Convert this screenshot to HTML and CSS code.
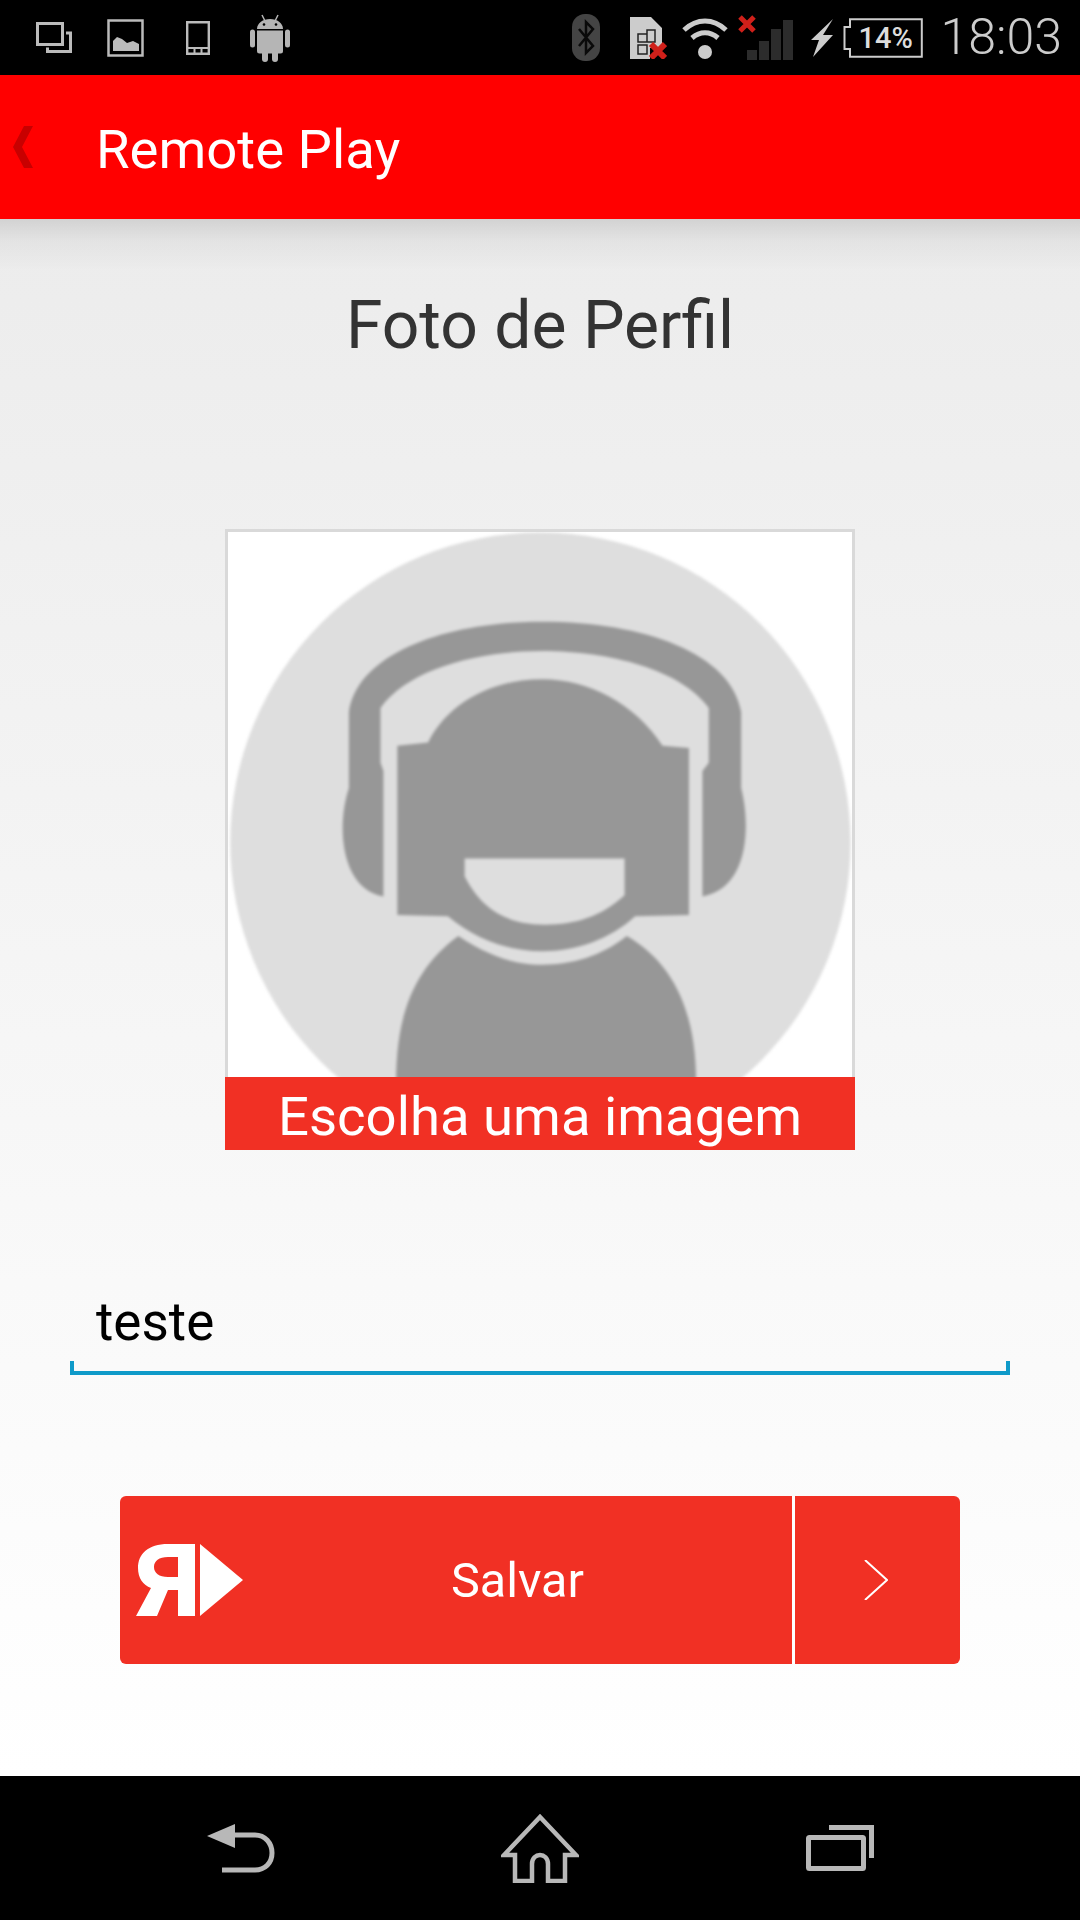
FILE: index.html
```html
<!DOCTYPE html>
<html lang="en">
<head>
    <meta charset="UTF-8">
    <meta name="viewport" content="width=device-width, initial-scale=1.0">
    <title>Remote Play</title>
    <link rel="stylesheet" href="styles.css">
</head>
<body>
    <div class="status-bar">
        <div class="status-left">
            <svg class="ic-windows" viewBox="0 0 36 31"><path d="M1.500 1.500h25v21h-25z" fill="none" stroke="#bbb" stroke-width="3"/><path d="M30 11h4.500v18.500h-23v-4" fill="none" stroke="#bbb" stroke-width="3"/></svg>
            <svg class="ic-picture" viewBox="0 0 37 38"><path d="M1.500 1.500h34v35h-34z" fill="none" stroke="#bbb" stroke-width="2.500"/><path d="M6 32V22l4-4 5 2 5 4 6-2 6 3v7z" fill="#bbb"/></svg>
            <svg class="ic-phone" viewBox="0 0 24 34"><path d="M1.200 1.200h21.600v31.600H1.200z" fill="none" stroke="#bbb" stroke-width="2.400"/><path d="M1 27h22M8.500 27v6M15.500 27v6" fill="none" stroke="#bbb" stroke-width="2"/></svg>
            <svg class="ic-android" viewBox="0 0 40 48"><path d="M12 1l3 6M28 1l-3 6" stroke="#b5b5b5" stroke-width="1.500"/><path d="M7 15C7 9 13 5 20 5s13 4 13 10z" fill="#b5b5b5"/><path d="M7 16.500h26V37a2.500 2.500 0 0 1-2.500 2.500h-21A2.500 2.500 0 0 1 7 37z" fill="#b5b5b5"/><rect x="0" y="15.500" width="5" height="18" rx="2.500" fill="#b5b5b5"/><rect x="35" y="15.500" width="5" height="18" rx="2.500" fill="#b5b5b5"/><rect x="12" y="36" width="6" height="12" rx="3" fill="#b5b5b5"/><rect x="22" y="36" width="6" height="12" rx="3" fill="#b5b5b5"/><circle cx="14" cy="10.500" r="1.300" fill="#000"/><circle cx="26" cy="10.500" r="1.300" fill="#000"/></svg>
        </div>
        <div class="status-right">
            <svg class="ic-bt" viewBox="0 0 28 47"><rect width="28" height="47" rx="13" fill="#444"/><path d="M7 15l14 17-7 7V8l7 7L7 32" fill="none" stroke="#0a0a0a" stroke-width="2.500"/></svg>
            <svg class="ic-sim" viewBox="0 0 37 42"><path d="M0 0h21l11 11v20H20v11H0z" fill="#ccc"/><path d="M8 17h9v8H8zM8 28h9v9H8zM17 13h8v12h-8z" fill="none" stroke="#222" stroke-width="1.500"/><path d="M21 27l14 14M35 27L21 41" stroke="#d0201a" stroke-width="6"/></svg>
            <svg class="ic-wifi" viewBox="0 0 46 42"><path d="M2 13C15 1 31 1 44 13" fill="none" stroke="#ccc" stroke-width="5"/><path d="M10 21c8-7 18-7 26 0" fill="none" stroke="#ccc" stroke-width="5"/><circle cx="23" cy="35" r="7" fill="#ccc"/></svg>
            <svg class="ic-signal" viewBox="0 0 55 45"><path d="M2 2l14 14M16 2L2 16" stroke="#d0201a" stroke-width="5"/><path d="M9 35h10v10H9zM21 26h10v19H21zM33 14h10v31H33zM45 5h10v40H45z" fill="#2c2c2c"/></svg>
            <svg class="ic-bolt" viewBox="0 0 23 38"><path d="M22 0L12 16h10L2 38l6-17H0z" fill="#ccc"/></svg>
            <div class="battery">
                <svg class="ic-battery" viewBox="0 0 80 40"><path d="M7 9V1.200h71.800v37.600H7V31H1.500V9z" fill="none" stroke="#ccc" stroke-width="2"/></svg>
                <span class="battery-text">14%</span>
            </div>
            <span class="clock">18:03</span>
        </div>
    </div>

    <div class="toolbar">
        <svg class="back-chev" viewBox="0 0 20 42"><path d="M11 0h9L9 21l11 21h-9L0 21z" fill="#c80000"/></svg>
        <span class="toolbar-title">Remote Play</span>
    </div>

    <div class="content">
        <h1 class="page-title">Foto de Perfil</h1>

        <div class="avatar">
            <svg class="avatar-img" viewBox="43 52 1482 1295">
                <rect x="36" y="45" width="1496" height="1302" fill="#fff"/>
                <g class="avatar-soft">
                    <circle cx="785" cy="790" r="737" fill="#dedede"/>
                    <path d="M330 660V480C350 340 560 265 790 265C1030 265 1240 340 1262 480V660C1285 750 1280 900 1170 918V620L1185 600V470C1120 380 950 335 790 335C630 335 470 380 405 470V600L412 620V918C310 900 300 750 330 660Z" fill="#979797"/>
                    <path d="M445 560L518 552C570 450 680 402 790 402C900 402 1010 460 1075 560L1138 565V962L1010 965C950 1020 870 1048 790 1048C710 1048 630 1020 565 965L445 962Z" fill="#979797"/>
                    <path d="M605 828H985V915C930 965 870 985 795 985C720 985 650 960 605 870Z" fill="#dedede"/>
                    <path d="M590 1012C670 1065 730 1080 790 1080C860 1080 930 1060 990 1012C1100 1075 1155 1190 1155 1360H442C442 1190 490 1085 590 1012Z" fill="#979797"/>
                </g>
            </svg>
            <div class="avatar-caption">Escolha uma imagem</div>
        </div>

        <div class="field">
            <div class="field-text">teste</div>
            <div class="field-line"></div>
        </div>

        <div class="save-btn">
            <div class="save-main">
                <svg class="logo" viewBox="0 0 107 72"><path d="M59 0H32C12 0 2 10 2 24c0 10 5 17 13 20L0 72h21l11-26h10v26h17zM42 13v20H32c-9 0-14-4-14-10s5-10 14-10z" fill="#fff" fill-rule="evenodd"/><path d="M64 0l43 36-43 36z" fill="#fff"/></svg>
                <span class="save-label">Salvar</span>
            </div>
            <div class="save-side">
                <svg class="side-chev" viewBox="0 0 24 40"><path d="M1 0l22 20L1 40" fill="none" stroke="#fff" stroke-width="2"/></svg>
            </div>
        </div>
    </div>

    <div class="nav-bar">
        <svg class="nav-back" viewBox="0 0 68 49"><path d="M0 12L28 0v24z" fill="#b8b8b8"/><path d="M26 11h22c10 0 17 8 17 18 0 10-7 17-17 17H15" fill="none" stroke="#b8b8b8" stroke-width="5"/></svg>
        <svg class="nav-home" viewBox="0 0 78 69"><path d="M39 3L3 41h11v26h17V50c0-12 16-12 16 0v17h17V41h11z" fill="none" stroke="#b8b8b8" stroke-width="4.500"/></svg>
        <svg class="nav-recent" viewBox="0 0 68 46"><path d="M23 2.500h42.500V33" fill="none" stroke="#b8b8b8" stroke-width="5"/><rect x="2.500" y="12.500" width="55" height="31" rx="1" fill="none" stroke="#b8b8b8" stroke-width="5"/></svg>
    </div>
</body>
</html>
```

FILE: styles.css
```css
* { box-sizing: border-box; }
html, body { margin: 0; padding: 0; }
body {
    width: 1080px;
    height: 1920px;
    display: flex;
    flex-direction: column;
    font-family: Roboto, sans-serif;
    overflow: hidden;
}

/* status bar */
.status-bar {
    height: 75px;
    background: #000;
    display: flex;
    justify-content: space-between;
    align-items: center;
    padding: 0 18px 0 36px;
}
.status-left, .status-right {
    display: flex;
    align-items: center;
}
.ic-windows { width: 36px; height: 31px; }
.ic-picture { width: 37px; height: 38px; margin-left: 35px; }
.ic-phone { width: 24px; height: 34px; margin-left: 42px; }
.ic-android { width: 40px; height: 48px; margin-left: 40px; }
.ic-bt { width: 28px; height: 47px; }
.ic-sim { width: 37px; height: 42px; margin-left: 30px; }
.ic-wifi { width: 46px; height: 42px; margin-left: 15px; }
.ic-signal { width: 55px; height: 45px; margin-left: 10px; }
.ic-bolt { width: 23px; height: 38px; margin-left: 18px; }
.battery { position: relative; width: 80px; height: 40px; margin-left: 9px; }
.ic-battery { width: 80px; height: 40px; display: block; }
.battery-text {
    position: absolute;
    left: 16px;
    top: 3px;
    font-size: 29px;
    line-height: 34px;
    font-weight: 500;
    color: #ddd;
}
.clock {
    font-size: 50px;
    font-weight: 300;
    color: #ccc;
    margin-left: 18px;
    line-height: 75px;
}

/* toolbar */
.toolbar {
    height: 144px;
    background: #f00;
    display: flex;
    align-items: center;
    padding-left: 13px;
}
.back-chev { width: 20px; height: 42px; }
.toolbar-title {
    font-size: 54.500px;
    color: #fff;
    margin-left: 63px;
    padding-top: 3px;
}

/* main */
.content {
    flex: 1;
    background:
        linear-gradient(to bottom, rgba(0, 0, 0, 0.11), rgba(0, 0, 0, 0.04) 22px, rgba(0, 0, 0, 0) 52px),
        linear-gradient(to bottom, #ececec, #ffffff);
    display: flex;
    flex-direction: column;
    align-items: center;
}
.page-title {
    margin: 71px 0 0;
    font-size: 66px;
    line-height: 72px;
    font-weight: 400;
    color: #333;
}
.avatar {
    width: 630px;
    margin-top: 167px;
}
.avatar-img {
    display: block;
    width: 630px;
    height: 548px;
    border: solid #d9d9d9;
    border-width: 3px 3px 0;
}
.avatar-soft { filter: blur(4px); }
.avatar-caption {
    height: 73px;
    background: #f13024;
    color: #fff;
    font-size: 54.500px;
    line-height: 78px;
    text-align: center;
}
.field {
    width: 940px;
    margin-top: 133px;
}
.field-text {
    font-size: 53px;
    line-height: 78px;
    color: #000;
    padding-left: 26px;
}
.field-line {
    height: 14px;
    border: solid #0f9ac9;
    border-width: 0 4px 4px;
}
.save-btn {
    width: 840px;
    height: 168px;
    margin-top: 121px;
    display: flex;
    border-radius: 6px;
    overflow: hidden;
    background: #f13024;
}
.save-main {
    width: 675px;
    display: flex;
    align-items: center;
    padding-left: 16px;
    border-right: 3px solid #fff;
}
.logo { width: 107px; height: 72px; }
.save-label {
    font-size: 48.500px;
    color: #fff;
    margin-left: 208px;
}
.save-side {
    flex: 1;
    display: flex;
    align-items: center;
    padding-left: 69px;
}
.side-chev { width: 24px; height: 40px; }

/* nav */
.nav-bar {
    height: 144px;
    background: #000;
    display: flex;
    align-items: center;
    padding-left: 207px;
}
.nav-back { width: 68px; height: 49px; }
.nav-home { width: 78px; height: 69px; margin-left: 226px; }
.nav-recent { width: 68px; height: 46px; margin-left: 227px; }
```
